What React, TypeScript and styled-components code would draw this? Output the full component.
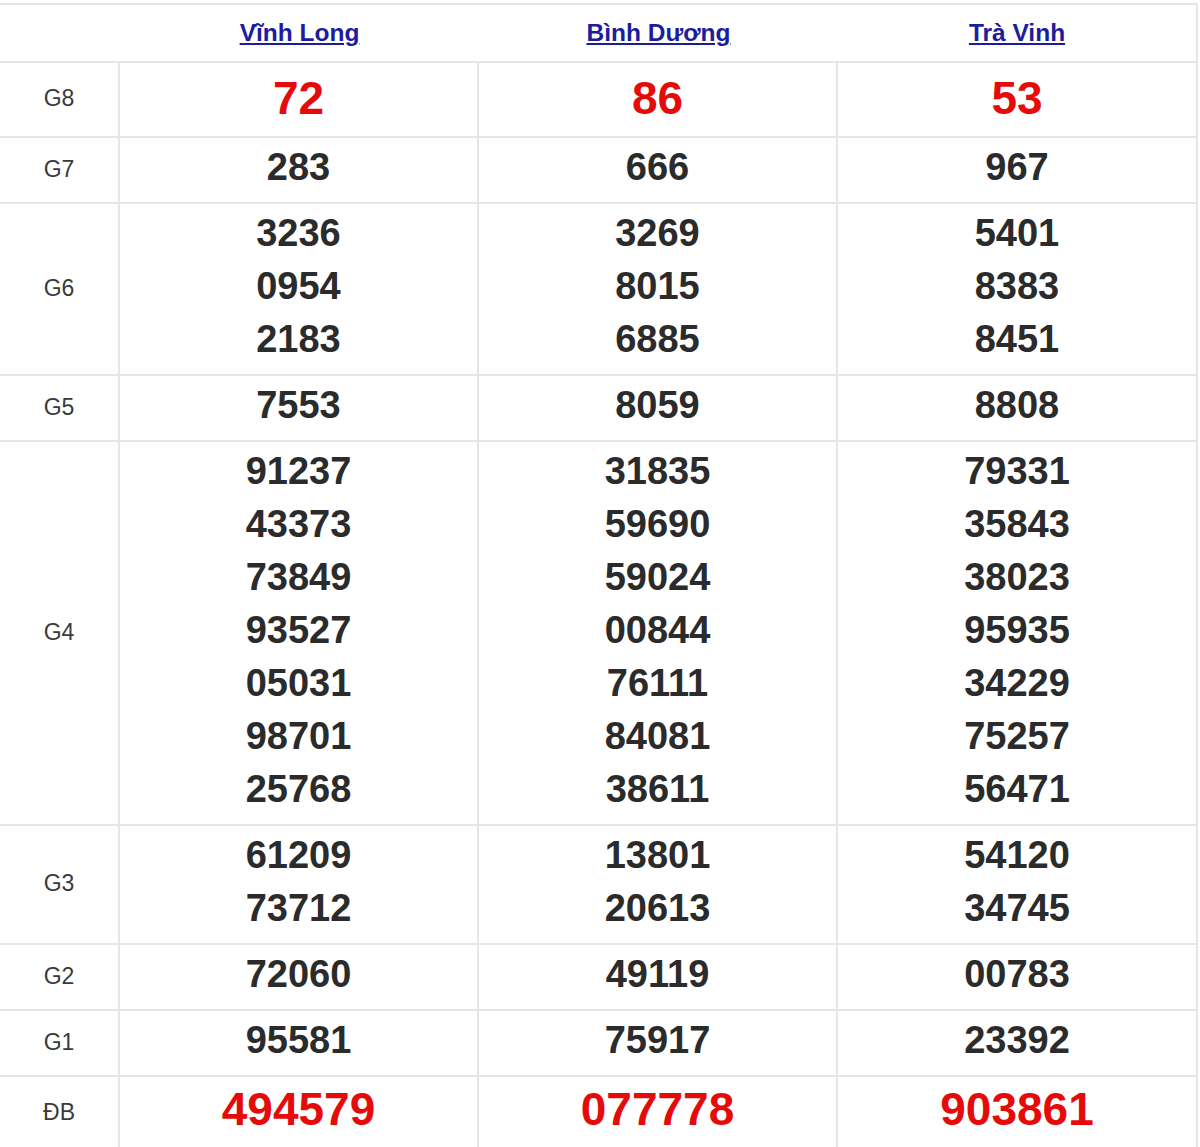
import React from "react";
import styled, { createGlobalStyle } from "styled-components";

const Global = createGlobalStyle`
  html, body { margin: 0; padding: 0; background: #fff; }
  body { font-family: "Liberation Sans", Arial, sans-serif; }
`;

const LINE = "#e6e6e6";

const Table = styled.table`
  width: 1198px;
  margin-top: 3px;
  border-collapse: separate;
  border-spacing: 0;
  border-top: 2px solid ${LINE};
  border-right: 2px solid ${LINE};
  table-layout: fixed;
  font-family: "Liberation Sans", Arial, sans-serif;
`;

const Col = styled.col<{ $w: number }>`
  width: ${(p) => p.$w}px;
`;

const HeadCell = styled.th`
  height: 56px;
  padding: 0;
  text-align: center;
  vertical-align: middle;
  font-weight: 700;
`;

const ProvinceLink = styled.a`
  font-size: 24.5px;
  font-weight: 700;
  color: #1c1c9c;
  text-decoration: underline;
  text-decoration-thickness: 2px;
  text-underline-offset: 2px;
`;

const LabelCell = styled.td`
  border-top: 2px solid ${LINE};
  border-right: 2px solid ${LINE};
  text-align: center;
  vertical-align: middle;
  font-size: 23px;
  color: #3a3a3a;
  padding: 0 0 2px;
`;

const NumCell = styled.td<{ $pad: string; $last?: boolean }>`
  border-top: 2px solid ${LINE};
  border-right: ${(p) => (p.$last ? "none" : `2px solid ${LINE}`)};
  text-align: center;
  vertical-align: top;
  padding: ${(p) => p.$pad};
`;

const Num = styled.div<{ $big?: boolean }>`
  font-weight: 700;
  font-size: ${(p) => (p.$big ? "46px" : "38px")};
  line-height: ${(p) => (p.$big ? "60px" : "53px")};
  color: ${(p) => (p.$big ? "#e60b0b" : "#2b2b2b")};
`;

type Row = { label: string; big?: boolean; pad?: string; values: string[][] };

const provinces = ["Vĩnh Long", "Bình Dương", "Trà Vinh"];

const rows: Row[] = [
  { label: "G8", big: true, pad: "5px 0 8px", values: [["72"], ["86"], ["53"]] },
  { label: "G7", values: [["283"], ["666"], ["967"]] },
  {
    label: "G6",
    values: [
      ["3236", "0954", "2183"],
      ["3269", "8015", "6885"],
      ["5401", "8383", "8451"],
    ],
  },
  { label: "G5", values: [["7553"], ["8059"], ["8808"]] },
  {
    label: "G4",
    values: [
      ["91237", "43373", "73849", "93527", "05031", "98701", "25768"],
      ["31835", "59690", "59024", "00844", "76111", "84081", "38611"],
      ["79331", "35843", "38023", "95935", "34229", "75257", "56471"],
    ],
  },
  {
    label: "G3",
    values: [
      ["61209", "73712"],
      ["13801", "20613"],
      ["54120", "34745"],
    ],
  },
  { label: "G2", values: [["72060"], ["49119"], ["00783"]] },
  { label: "G1", values: [["95581"], ["75917"], ["23392"]] },
  { label: "ĐB", big: true, pad: "2px 0 11px", values: [["494579"], ["077778"], ["903861"]] },
];

export default function App() {
  return (
    <>
      <Global />
      <Table>
        <colgroup>
          <Col $w={120} />
          <Col $w={359} />
          <Col $w={359} />
          <Col $w={358} />
        </colgroup>
        <thead>
          <tr>
            <HeadCell />
            {provinces.map((p) => (
              <HeadCell key={p}>
                <ProvinceLink href="#">{p}</ProvinceLink>
              </HeadCell>
            ))}
          </tr>
        </thead>
        <tbody>
          {rows.map((r) => (
            <tr key={r.label}>
              <LabelCell>{r.label}</LabelCell>
              {r.values.map((vals, i) => (
                <NumCell key={i} $pad={r.pad ?? "3px 0 8px"} $last={i === 2}>
                  {vals.map((v, j) => (
                    <Num key={j} $big={r.big}>
                      {v}
                    </Num>
                  ))}
                </NumCell>
              ))}
            </tr>
          ))}
        </tbody>
      </Table>
    </>
  );
}
